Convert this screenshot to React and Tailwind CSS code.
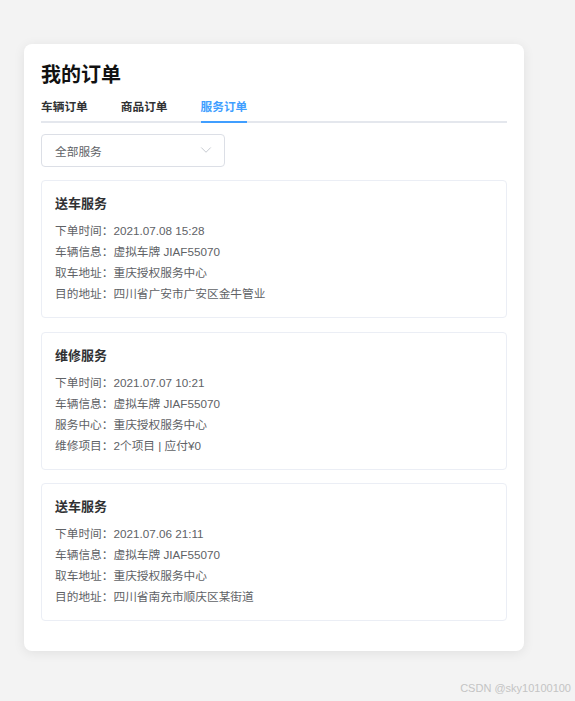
import { ChevronDown } from 'lucide-react'

const tabs = ['车辆订单', '商品订单', '服务订单']

const orders = [
  {
    title: '送车服务',
    rows: [
      ['下单时间', '2021.07.08 15:28'],
      ['车辆信息', '虚拟车牌 JIAF55070'],
      ['取车地址', '重庆授权服务中心'],
      ['目的地址', '四川省广安市广安区金牛管业'],
    ],
  },
  {
    title: '维修服务',
    rows: [
      ['下单时间', '2021.07.07 10:21'],
      ['车辆信息', '虚拟车牌 JIAF55070'],
      ['服务中心', '重庆授权服务中心'],
      ['维修项目', '2个项目 | 应付¥0'],
    ],
  },
  {
    title: '送车服务',
    rows: [
      ['下单时间', '2021.07.06 21:11'],
      ['车辆信息', '虚拟车牌 JIAF55070'],
      ['取车地址', '重庆授权服务中心'],
      ['目的地址', '四川省南充市顺庆区某街道'],
    ],
  },
]

function OrderCard({ order }) {
  return (
    <div className="rounded-[4px] border border-[#ebeef5] bg-white px-[13px] pt-[12px] pb-[13px]">
      <div className="mb-[6px] text-[13px] leading-[21px] font-bold text-[#303133]">{order.title}</div>
      {order.rows.map(([label, value], i) => (
        <div key={i} className="text-[11.7px] leading-[21px] text-[#606266]">
          {label}：{value}
        </div>
      ))}
    </div>
  )
}

export default function App() {
  const active = 2
  return (
    <div
      className="relative min-h-screen bg-[#f3f3f3] pt-[44px] pl-[24px]"
      style={{ fontFamily: '"Liberation Sans", "Noto Sans CJK SC", sans-serif' }}
    >
      <div className="w-[500px] rounded-[8px] bg-white px-[17px] pt-[17px] pb-[30px] shadow-[0_2px_12px_rgba(0,0,0,0.08)]">
        <h1 className="text-[20px] leading-[28px] font-bold text-[#111]">我的订单</h1>

        <div className="mt-[2px] flex gap-[33px] border-b-2 border-[#e4e7ed]">
          {tabs.map((t, i) => (
            <div
              key={t}
              className={
                i === active
                  ? '-mb-[2px] flex h-[32px] items-center border-b-2 border-[#409eff] pt-[2px] text-[11.7px] font-bold text-[#409eff]'
                  : '-mb-[2px] flex h-[32px] items-center border-b-2 border-transparent pt-[2px] text-[11.7px] font-bold text-[#303133]'
              }
            >
              {t}
            </div>
          ))}
        </div>

        <div className="mt-[11px] flex h-[33px] w-[184px] items-center justify-between rounded-[4px] border border-[#dcdfe6] pr-[9px] pl-[13px]">
          <span className="mt-[3px] text-[11.7px] text-[#606266]">全部服务</span>
          <ChevronDown size={18} strokeWidth={1.2} className="-mt-[2px] text-[#c0c4cc]" />
        </div>

        <div className="mt-[13px] flex flex-col gap-[13.5px]">
          {orders.map((o, i) => (
            <OrderCard key={i} order={o} />
          ))}
        </div>
      </div>

      <div className="absolute right-[4px] bottom-[5px] text-[11px] text-[#c4c4c4]">CSDN @sky10100100</div>
    </div>
  )
}
